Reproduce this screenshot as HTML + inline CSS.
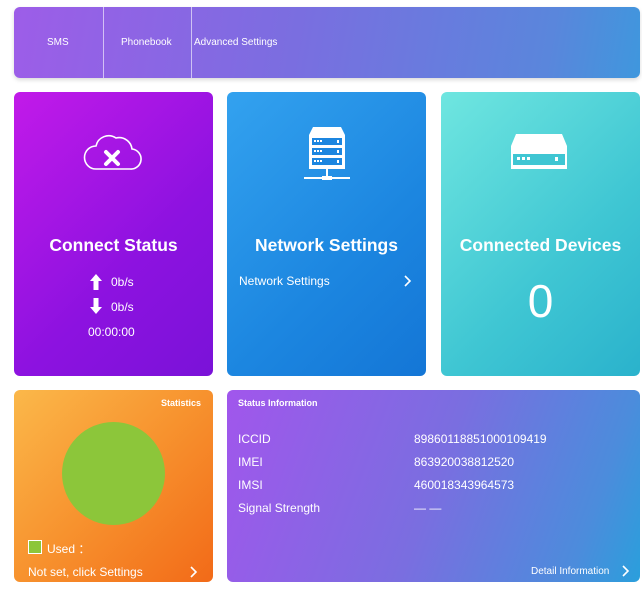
<!DOCTYPE html>
<html><head><meta charset="utf-8"><style>
*{margin:0;padding:0;box-sizing:border-box}
body{width:642px;height:591px;background:#fff;font-family:"Liberation Sans",sans-serif;color:#fff;position:relative;overflow:hidden}
.a{position:absolute}
.nav{left:14px;top:7px;width:626px;height:71px;border-radius:6px;background:linear-gradient(100deg,#9d5de8 0%,#7a6ee0 45%,#5a86dc 85%,#3f97dd 100%);box-shadow:0 2px 4px rgba(0,0,0,.15)}
.nav span{position:absolute;top:30px;font-size:10px}
.sep{position:absolute;top:0;width:1px;height:71px;background:rgba(255,255,255,.6)}
.card{border-radius:6px;overflow:hidden}
.c1{left:14px;top:92px;width:199px;height:284px;background:linear-gradient(135deg,#c21ae9,#8d12e0 60%,#7a12d8)}
.c2{left:227px;top:92px;width:199px;height:284px;background:linear-gradient(135deg,#33a2ef,#1c86e0 60%,#1476d6)}
.c3{left:441px;top:92px;width:199px;height:284px;background:linear-gradient(135deg,#6fe6e0,#3fc6d3 60%,#2ab2cc)}
.c4{left:14px;top:390px;width:199px;height:192px;background:linear-gradient(135deg,#fbb84a,#f7922e 50%,#f26a18)}
.c5{left:227px;top:390px;width:413px;height:192px;background:linear-gradient(110deg,#a156ec,#7a6ee0 50%,#4c8cdc 85%,#2a9fdc)}
h2{position:absolute;left:0;width:100%;text-align:center;font-size:17.5px;font-weight:bold;top:143px}
.t{position:absolute;font-size:12px}
</style></head><body>
<div class="a nav">
<span style="left:33px">SMS</span>
<div class="sep" style="left:89px"></div>
<span style="left:107px">Phonebook</span>
<div class="sep" style="left:177px"></div>
<span style="left:180px">Advanced Settings</span>
</div>

<div class="a card c1">
<svg class="a" style="left:68px;top:40px" width="62" height="40" viewBox="0 0 62 40"><path d="M14 37 H48 A10 10 0 0 0 50 17 A13 13 0 0 0 34 6 A13 13 0 0 0 14 14 A11 11 0 0 0 14 37 Z" fill="none" stroke="#fff" stroke-width="1.6"/><path d="M24 20 L36 32 M36 20 L24 32" stroke="#fff" stroke-width="4" stroke-linecap="round"/></svg>
<h2>Connect Status</h2>
<svg class="a" style="left:76px;top:182px" width="12" height="16"><path d="M6 0 L12 7 H8.5 V16 H3.5 V7 H0 Z" fill="#fff"/></svg>
<div class="t" style="left:97px;top:183px">0b/s</div>
<svg class="a" style="left:76px;top:206px" width="12" height="16"><path d="M6 16 L12 9 H8.5 V0 H3.5 V9 H0 Z" fill="#fff"/></svg>
<div class="t" style="left:97px;top:208px">0b/s</div>
<div class="t" style="left:74px;top:233px">00:00:00</div>
</div>

<div class="a card c2">
<svg class="a" style="left:76px;top:33px" width="48" height="60" viewBox="0 0 48 60"><path d="M10 2 H38 L42 10 H6 Z" fill="#fff"/><rect x="6" y="10" width="36" height="34" fill="#fff"/><g fill="#1c86e0"><rect x="9" y="13" width="30" height="7"/><rect x="9" y="23" width="30" height="7"/><rect x="9" y="33" width="30" height="7"/></g><g fill="#fff"><rect x="11" y="15" width="2" height="2"/><rect x="14" y="15" width="2" height="2"/><rect x="17" y="15" width="2" height="2"/><rect x="34" y="15" width="2" height="3"/><rect x="11" y="25" width="2" height="2"/><rect x="14" y="25" width="2" height="2"/><rect x="17" y="25" width="2" height="2"/><rect x="34" y="25" width="2" height="3"/><rect x="11" y="35" width="2" height="2"/><rect x="14" y="35" width="2" height="2"/><rect x="17" y="35" width="2" height="2"/><rect x="34" y="35" width="2" height="3"/><rect x="23" y="44" width="2" height="9"/><rect x="19" y="51" width="10" height="4"/><rect x="1" y="52" width="46" height="2"/></g></svg>
<h2>Network Settings</h2>
<div class="t" style="left:12px;top:182px">Network Settings</div>
<svg class="a" style="left:177px;top:183px" width="8" height="12"><path d="M1 1 L6 6 L1 11" fill="none" stroke="#fff" stroke-width="1.6"/></svg>
</div>

<div class="a card c3">
<svg class="a" style="left:68px;top:40px" width="60" height="40" viewBox="0 0 60 40"><path d="M7 2 H53 L58 14 V37 H2 V14 Z" fill="#fff"/><rect x="4" y="22" width="52" height="11" fill="#3fc6d3"/><g fill="#fff"><rect x="8" y="25" width="3" height="3"/><rect x="13" y="25" width="3" height="3"/><rect x="18" y="25" width="3" height="3"/><rect x="46" y="25" width="3" height="4"/></g></svg>
<h2>Connected Devices</h2>
<div class="a" style="left:0;width:100%;text-align:center;top:182px;font-size:46px">0</div>
</div>

<div class="a card c4">
<div class="t" style="right:12px;top:8px;font-size:9px;font-weight:bold">Statistics</div>
<div class="a" style="left:48px;top:32px;width:103px;height:103px;border-radius:50%;background:#8cc63a"></div>
<div class="a" style="left:14px;top:150px;width:14px;height:14px;background:#8cc63a;border:1px solid #fff"></div>
<div class="t" style="left:33px;top:150px">Used ：</div>
<div class="t" style="left:14px;top:175px">Not set, click Settings</div>
<svg class="a" style="left:176px;top:176px" width="8" height="12"><path d="M1 1 L6 6 L1 11" fill="none" stroke="#fff" stroke-width="1.6"/></svg>
</div>

<div class="a card c5">
<div class="t" style="left:11px;top:8px;font-size:9px;font-weight:bold">Status Information</div>
<div class="t" style="left:11px;top:42px">ICCID</div><div class="t" style="left:187px;top:42px">89860118851000109419</div>
<div class="t" style="left:11px;top:65px">IMEI</div><div class="t" style="left:187px;top:65px">863920038812520</div>
<div class="t" style="left:11px;top:88px">IMSI</div><div class="t" style="left:187px;top:88px">460018343964573</div>
<div class="t" style="left:11px;top:111px">Signal Strength</div><div class="t" style="left:187px;top:111px">— —</div>
<div class="t" style="left:304px;top:176px;font-size:10px">Detail Information</div>
<svg class="a" style="left:395px;top:175px" width="8" height="12"><path d="M1 1 L6 6 L1 11" fill="none" stroke="#fff" stroke-width="1.6"/></svg>
</div>
</body></html>
